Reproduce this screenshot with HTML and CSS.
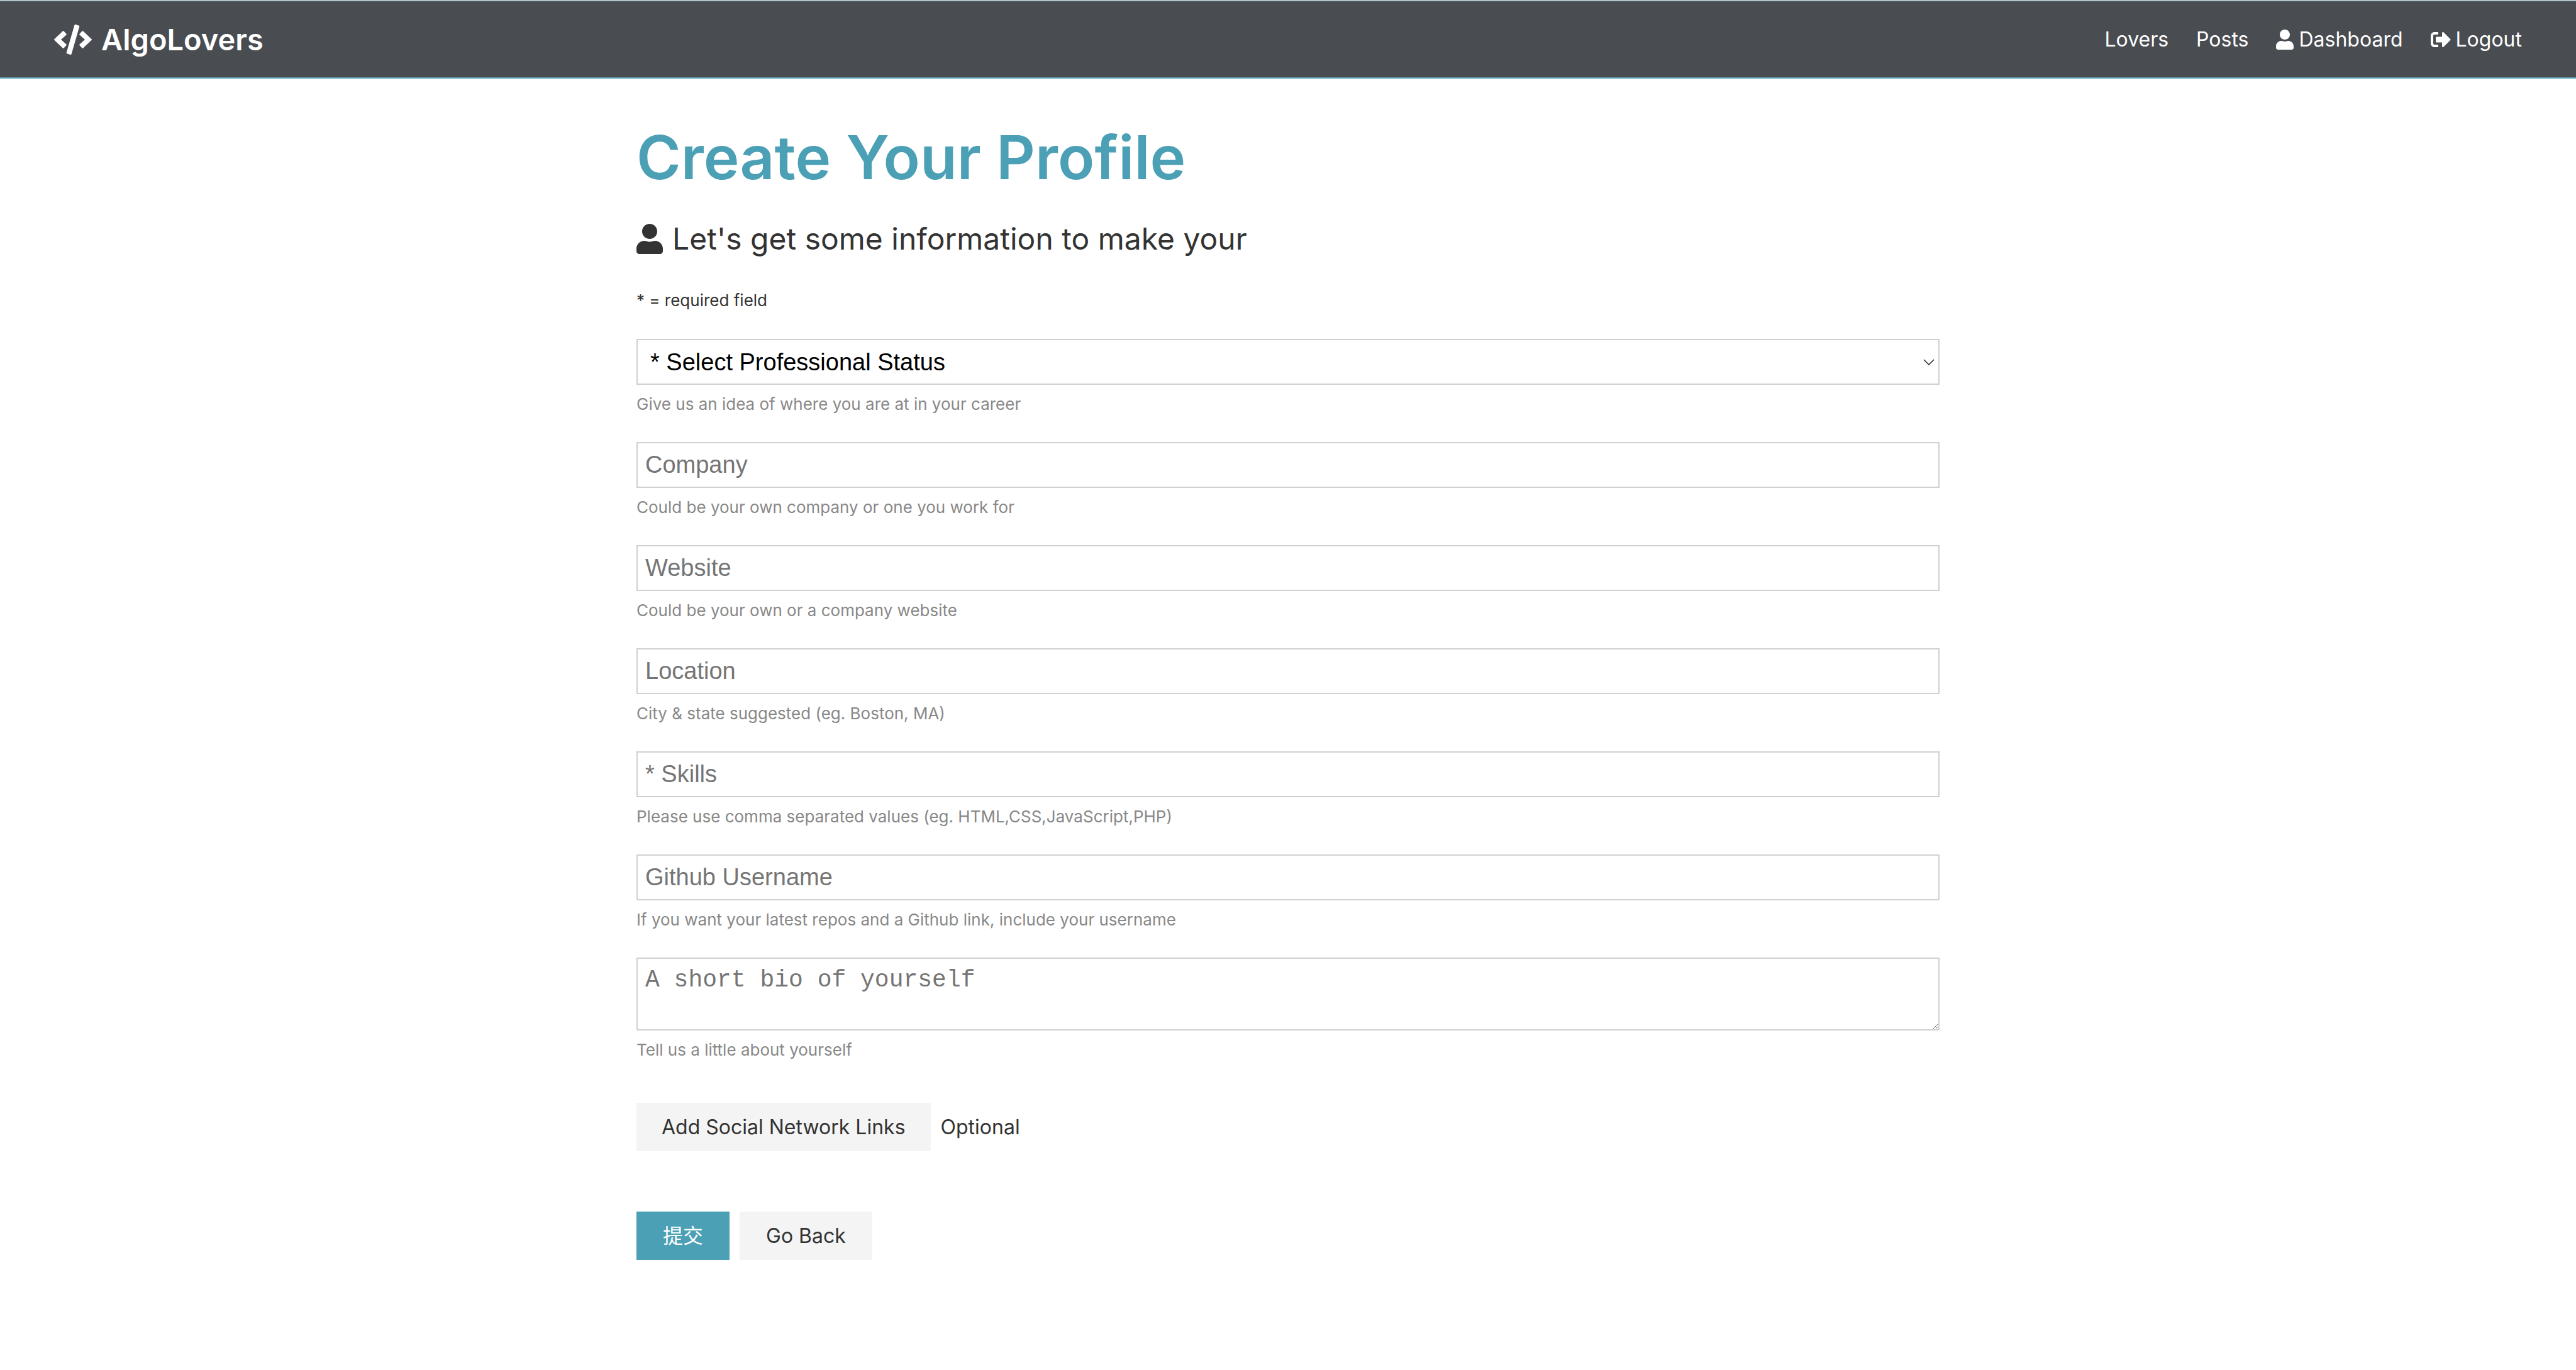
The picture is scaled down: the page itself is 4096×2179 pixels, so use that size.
FILE: index.html
```html
<!DOCTYPE html>
<html lang="en">
<head>
<meta charset="utf-8">
<title>AlgoLovers</title>
<link rel="stylesheet" href="styles.css">
</head>
<body>
<svg class="sprite" aria-hidden="true">
  <symbol id="code" viewBox="0 0 640 512"><path d="M278.9 511.5l-61-17.7c-6.4-1.8-10-8.5-8.2-14.9L346.2 8.7c1.8-6.4 8.5-10 14.9-8.2l61 17.7c6.4 1.8 10 8.5 8.2 14.9L293.8 503.3c-1.9 6.4-8.5 10.1-14.9 8.2zm-114-112.2l43.5-46.4c4.6-4.9 4.3-12.7-.8-17.2L117 256l90.6-79.7c5.1-4.5 5.5-12.3.8-17.2l-43.5-46.4c-4.5-4.8-12.1-5.1-17-.5L3.8 247.2c-5.1 4.7-5.1 12.8 0 17.5l144.1 135.1c4.9 4.6 12.5 4.4 17-.5zm327.2.6l144.1-135.1c5.1-4.7 5.1-12.8 0-17.5L492.1 112.1c-4.8-4.5-12.4-4.3-17 .5L431.6 159c-4.6 4.9-4.3 12.7.8 17.2L523 256l-90.6 79.7c-5.1 4.5-5.5 12.3-.8 17.2l43.5 46.4c4.5 4.9 12.1 5.1 17 .6z"/></symbol>
  <symbol id="user" viewBox="0 0 448 512"><path d="M224 256c70.7 0 128-57.3 128-128S294.7 0 224 0 96 57.3 96 128s57.3 128 128 128zm89.6 32h-16.7c-22.2 10.2-46.9 16-72.9 16s-50.6-5.8-72.9-16h-16.7C60.2 288 0 348.2 0 422.4V464c0 26.5 21.5 48 48 48h352c26.5 0 48-21.5 48-48v-41.6c0-74.2-60.2-134.4-134.4-134.4z"/></symbol>
  <symbol id="sign-out" viewBox="0 0 512 512"><path d="M497 273L329 441c-15 15-41 4.5-41-17v-96H152c-13.3 0-24-10.7-24-24v-96c0-13.3 10.7-24 24-24h136V88c0-21.4 25.9-32 41-17l168 168c9.3 9.4 9.3 24.6 0 34zM192 436v-40c0-6.6-5.4-12-12-12H96c-17.7 0-32-14.3-32-32V160c0-17.7 14.3-32 32-32h84c6.6 0 12-5.4 12-12V76c0-6.6-5.4-12-12-12H96c-53 0-96 43-96 96v192c0 53 43 96 96 96h84c6.6 0 12-5.4 12-12z"/></symbol>
</svg>

<header class="navbar">
  <h1 class="brand"><a class="brand-link" href="#"><svg class="icon icon-code"><use href="#code"/></svg>AlgoLovers</a></h1>
  <nav class="nav-links">
    <a class="nav-link" href="#">Lovers</a>
    <a class="nav-link" href="#">Posts</a>
    <a class="nav-link" href="#"><svg class="icon icon-user"><use href="#user"/></svg>Dashboard</a>
    <a class="nav-link" href="#"><svg class="icon icon-out"><use href="#sign-out"/></svg>Logout</a>
  </nav>
</header>

<main class="container">
  <h2 class="title">Create Your Profile</h2>
  <p class="lead"><svg class="icon icon-lead"><use href="#user"/></svg>Let's get some information to make your</p>
  <p class="note">* = required field</p>

  <form class="form">
    <div class="form-group">
      <div class="select-wrap">
        <select class="field field-select" aria-label="Professional status">
          <option>* Select Professional Status</option>
          <option>Developer</option>
          <option>Student or Learning</option>
          <option>Other</option>
        </select>
        <svg class="chevron" viewBox="0 0 18 10"><path d="M1 1l8 8 8-8"/></svg>
      </div>
      <small class="hint">Give us an idea of where you are at in your career</small>
    </div>
    <div class="form-group">
      <input class="field" type="text" placeholder="Company" aria-label="Company">
      <small class="hint">Could be your own company or one you work for</small>
    </div>
    <div class="form-group">
      <input class="field" type="text" placeholder="Website" aria-label="Website">
      <small class="hint">Could be your own or a company website</small>
    </div>
    <div class="form-group">
      <input class="field" type="text" placeholder="Location" aria-label="Location">
      <small class="hint">City &amp; state suggested (eg. Boston, MA)</small>
    </div>
    <div class="form-group">
      <input class="field" type="text" placeholder="* Skills" aria-label="Skills">
      <small class="hint">Please use comma separated values (eg. HTML,CSS,JavaScript,PHP)</small>
    </div>
    <div class="form-group">
      <input class="field" type="text" placeholder="Github Username" aria-label="Github username">
      <small class="hint">If you want your latest repos and a Github link, include your username</small>
    </div>
    <div class="form-group">
      <textarea class="field field-bio" placeholder="A short bio of yourself" aria-label="Bio"></textarea>
      <small class="hint">Tell us a little about yourself</small>
    </div>
    <div class="row row-social">
      <button class="btn" type="button">Add Social Network Links</button>
      <span>Optional</span>
    </div>
    <div class="row row-actions">
      <button class="btn btn-primary" type="submit">提交</button>
      <a class="btn" href="#">Go Back</a>
    </div>
  </form>
</main>
</body>
</html>
```
FILE: styles.css
```css
* {
  box-sizing: border-box;
  margin: 0;
  padding: 0;
}

body {
  font-family: Inter, "Noto Sans CJK SC", sans-serif;
  font-size: 32px;
  line-height: 51px;
  color: #333;
  background: #fff;
}

a {
  color: inherit;
  text-decoration: none;
}

.sprite {
  display: none;
}

.icon {
  flex: none;
  fill: currentColor;
}

.navbar {
  display: flex;
  align-items: center;
  justify-content: space-between;
  height: 125px;
  padding: 0 86px;
  color: #fff;
  background: #494c51;
  border-top: 2px solid #adc5cb;
  border-bottom: 2px solid #5ba7b7;
}

.brand {
  font-size: 47px;
  font-weight: 600;
  line-height: 72px;
}

.brand-link {
  display: flex;
  align-items: center;
  gap: 15px;
}

.icon-code {
  width: 60px;
  height: 48px;
}

.nav-links {
  display: flex;
  gap: 44px;
}

.nav-link {
  display: flex;
  align-items: center;
  gap: 8px;
}

.icon-user {
  width: 28px;
  height: 32px;
}

.icon-out {
  width: 32px;
  height: 32px;
}

.container {
  max-width: 2200px;
  margin: 0 auto;
  padding: 67px 64px;
}

.title {
  font-size: 96px;
  font-weight: 600;
  line-height: 116px;
  color: #4ba0b6;
}

.lead {
  display: flex;
  align-items: center;
  gap: 15px;
  margin-top: 36px;
  font-size: 48px;
  line-height: 72px;
}

.icon-lead {
  width: 42px;
  height: 48px;
}

.note {
  margin-top: 41px;
  font-size: 26px;
  line-height: 42px;
}

.form {
  margin-top: 40px;
}

.form-group {
  margin-bottom: 39px;
}

.select-wrap {
  position: relative;
}

.field {
  display: block;
  width: 100%;
  height: 73px;
  padding: 12px;
  font-family: "Liberation Sans", Arial, sans-serif;
  font-size: 38px;
  line-height: 44px;
  color: #000;
  background: #fff;
  border: 2px solid #d0d0d0;
  border-radius: 0;
}

.field::placeholder {
  color: #757575;
  opacity: 1;
}

.field-select {
  height: 73px;
  padding-left: 20px;
  appearance: none;
}

.chevron {
  position: absolute;
  top: 32px;
  right: 8px;
  width: 18px;
  height: 10px;
  fill: none;
  stroke: #222;
  stroke-width: 1.5;
  pointer-events: none;
}

.field-bio {
  height: 116px;
  font-family: "Liberation Mono", "Courier New", monospace;
  resize: vertical;
}

.hint {
  display: block;
  margin-top: 10px;
  font-size: 26px;
  line-height: 42px;
  color: #888;
}

.row {
  display: flex;
  align-items: center;
  gap: 16px;
}

.row-social {
  margin-top: 63px;
}

.row-actions {
  margin-top: 96px;
}

.btn {
  padding: 13px 42px;
  font: inherit;
  color: #333;
  background: #f4f4f4;
  border: none;
}

.row-social .btn {
  padding: 13px 40px;
}

.btn-primary {
  color: #fff;
  background: #4ba0b6;
}
```
